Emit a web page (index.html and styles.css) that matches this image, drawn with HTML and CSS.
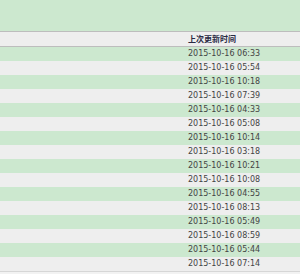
FILE: index.html
```html
<!DOCTYPE html>
<html lang="zh">
<head>
<meta charset="utf-8">
<link rel="stylesheet" href="styles.css">
</head>
<body>
<div class="top-band"></div>
<table class="grid">
  <thead>
    <tr><th class="spacer"></th><th class="time">上次更新时间</th></tr>
  </thead>
  <tbody>
    <tr><td></td><td>2015-10-16 06:33</td></tr>
    <tr><td></td><td>2015-10-16 05:54</td></tr>
    <tr><td></td><td>2015-10-16 10:18</td></tr>
    <tr><td></td><td>2015-10-16 07:39</td></tr>
    <tr><td></td><td>2015-10-16 04:33</td></tr>
    <tr><td></td><td>2015-10-16 05:08</td></tr>
    <tr><td></td><td>2015-10-16 10:14</td></tr>
    <tr><td></td><td>2015-10-16 03:18</td></tr>
    <tr><td></td><td>2015-10-16 10:21</td></tr>
    <tr><td></td><td>2015-10-16 10:08</td></tr>
    <tr><td></td><td>2015-10-16 04:55</td></tr>
    <tr><td></td><td>2015-10-16 08:13</td></tr>
    <tr><td></td><td>2015-10-16 05:49</td></tr>
    <tr><td></td><td>2015-10-16 08:59</td></tr>
    <tr><td></td><td>2015-10-16 05:44</td></tr>
    <tr><td></td><td>2015-10-16 07:14</td></tr>
  </tbody>
</table>
</body>
</html>
```
FILE: styles.css
```css
html, body {
  margin: 0;
  padding: 0;
  background: #f2f2f2;
}
body {
  width: 300px;
  height: 274px;
  overflow: hidden;
  font-family: "DejaVu Sans", Verdana, "Noto Sans CJK SC", sans-serif;
  font-size: 8px;
  color: #444;
}
.top-band {
  height: 31px;
  background: #cce8cf;
}
.grid {
  width: 300px;
  border-collapse: collapse;
  table-layout: fixed;
}
.grid th,
.grid td {
  padding: 0;
  height: 14px;
  line-height: 14px;
  text-align: left;
  white-space: nowrap;
  vertical-align: middle;
}
.grid .spacer {
  width: 188px;
}
.grid thead tr {
  background: #eeeeee;
  border-top: 1px solid #bdbdbd;
  border-bottom: 1px solid #bdbdbd;
}
.grid th.time {
  font-family: "Noto Sans CJK SC", sans-serif;
  font-weight: bold;
  color: #2a2a44;
  font-size: 8px;
}
.grid tbody tr:nth-child(odd) {
  background: #cce8cf;
}
.grid tbody tr:nth-child(even) {
  background: #eeeeee;
}
.grid tbody tr:last-child {
  border-bottom: 1px solid #d6d6d6;
}
```
